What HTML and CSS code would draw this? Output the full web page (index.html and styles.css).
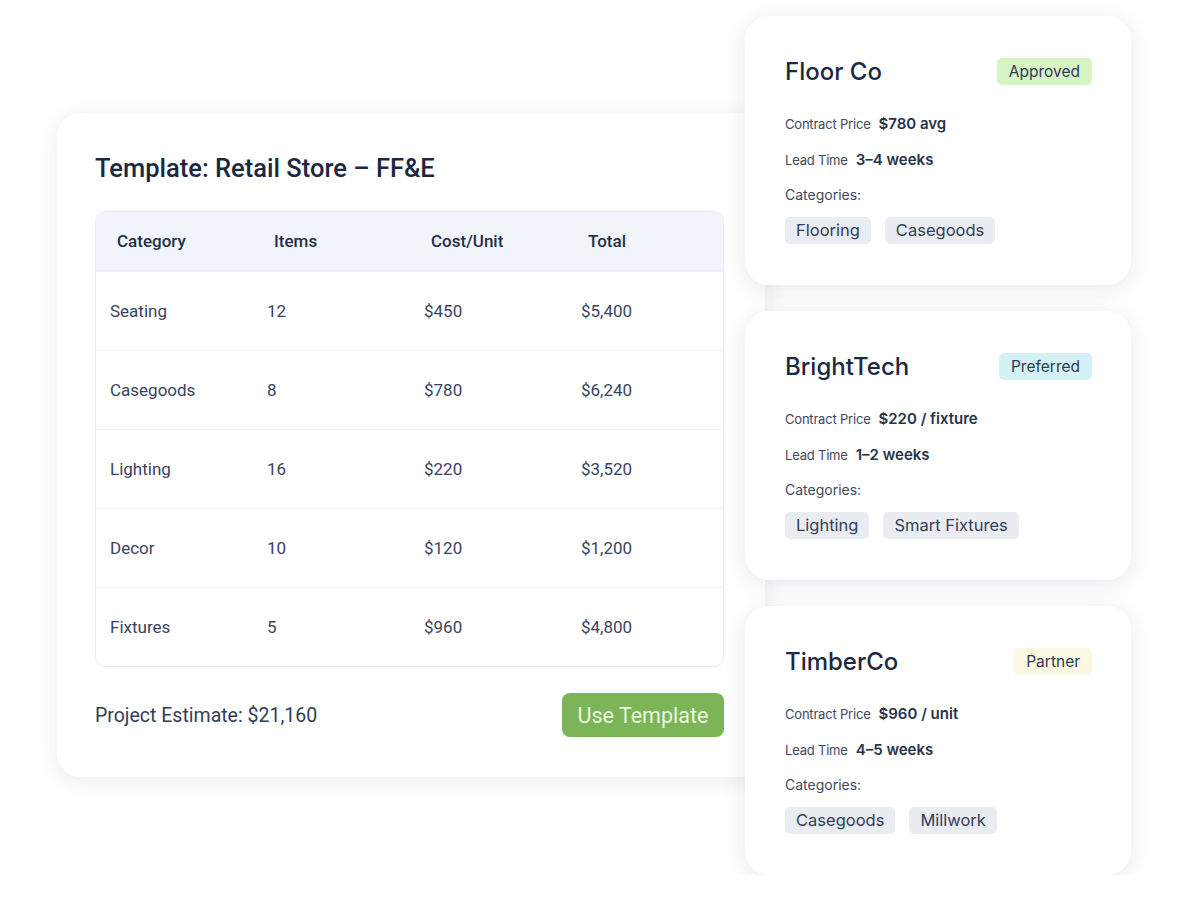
FILE: index.html
```html
<!DOCTYPE html>
<html lang="en">
<head>
    <meta charset="UTF-8">
    <meta name="viewport" content="width=device-width, initial-scale=1.0">
    <title>Retail Store Template</title>
    <link rel="stylesheet" href="styles.css">
</head>
<body>
    <div class="stage">
        <section class="template-card">
            <h2 class="template-title">Template: Retail Store – FF&amp;E</h2>
            <div class="table-box">
                <div class="trow thead">
                    <div>Category</div>
                    <div>Items</div>
                    <div>Cost/Unit</div>
                    <div>Total</div>
                </div>
                <div class="trow">
                    <div>Seating</div><div>12</div><div>$450</div><div>$5,400</div>
                </div>
                <div class="trow">
                    <div>Casegoods</div><div>8</div><div>$780</div><div>$6,240</div>
                </div>
                <div class="trow">
                    <div>Lighting</div><div>16</div><div>$220</div><div>$3,520</div>
                </div>
                <div class="trow">
                    <div>Decor</div><div>10</div><div>$120</div><div>$1,200</div>
                </div>
                <div class="trow">
                    <div>Fixtures</div><div>5</div><div>$960</div><div>$4,800</div>
                </div>
            </div>
            <div class="template-foot">
                <span class="estimate">Project Estimate: $21,160</span>
                <button class="use-btn">Use Template</button>
            </div>
        </section>

        <div class="vendors">
            <div class="vendor">
                <div class="vendor-head">
                    <h3>Floor Co</h3>
                    <span class="badge approved">Approved</span>
                </div>
                <div class="meta meta-first"><span class="meta-label">Contract Price</span><span class="meta-value">$780 avg</span></div>
                <div class="meta"><span class="meta-label">Lead Time</span><span class="meta-value">3–4 weeks</span></div>
                <div class="cats">Categories:</div>
                <div class="tags"><span class="tag">Flooring</span><span class="tag">Casegoods</span></div>
            </div>
            <div class="vendor">
                <div class="vendor-head">
                    <h3>BrightTech</h3>
                    <span class="badge preferred">Preferred</span>
                </div>
                <div class="meta meta-first"><span class="meta-label">Contract Price</span><span class="meta-value">$220 / fixture</span></div>
                <div class="meta"><span class="meta-label">Lead Time</span><span class="meta-value">1–2 weeks</span></div>
                <div class="cats">Categories:</div>
                <div class="tags"><span class="tag">Lighting</span><span class="tag">Smart Fixtures</span></div>
            </div>
            <div class="vendor">
                <div class="vendor-head">
                    <h3>TimberCo</h3>
                    <span class="badge partner">Partner</span>
                </div>
                <div class="meta meta-first"><span class="meta-label">Contract Price</span><span class="meta-value">$960 / unit</span></div>
                <div class="meta"><span class="meta-label">Lead Time</span><span class="meta-value">4–5 weeks</span></div>
                <div class="cats">Categories:</div>
                <div class="tags"><span class="tag">Casegoods</span><span class="tag">Millwork</span></div>
            </div>
        </div>
    </div>
</body>
</html>
```

FILE: styles.css
```css
body {
    margin: 0;
    background-color: #fff;
    font-family: Roboto, "Liberation Sans", sans-serif;
    color: #2b3550;
}
h2, h3 {
    margin: 0;
}
.stage {
    display: flex;
    align-items: flex-start;
    padding: 16px 0 0 57px;
}

/* template card */
.template-card {
    width: 708px;
    box-sizing: border-box;
    margin-top: 97px;
    padding: 40px 41px 40px 38px;
    background-color: #fff;
    border-radius: 24px;
    box-shadow: 0 4px 22px rgba(20, 30, 60, 0.09);
}
.template-title {
    font-size: 25.5px;
    font-weight: 500;
    line-height: 30px;
    color: #1c2742;
}
.table-box {
    margin-top: 28px;
    border: 1px solid #e9edf3;
    border-radius: 10px;
    overflow: hidden;
}
.trow {
    display: grid;
    grid-template-columns: 157px 157px 157px 1fr;
    box-sizing: border-box;
    height: 79px;
    align-items: center;
    border-top: 1px solid #f0f2f6;
    font-size: 17px;
    color: #39435e;
}
.trow div {
    padding-left: 14px;
}
.thead {
    height: 59px;
    border-top: none;
    background-color: #f1f5fb;
    border-bottom: 1px solid #e8edf4;
    font-weight: 500;
    color: #243049;
}
.thead div {
    padding-left: 21px;
}
.template-foot {
    display: flex;
    justify-content: space-between;
    align-items: center;
    margin-top: 26px;
}
.estimate {
    font-size: 19.5px;
    color: #333d58;
}
.use-btn {
    width: 162px;
    height: 44px;
    border: none;
    border-radius: 8px;
    background-color: #7bb557;
    color: #eaf6de;
    font-family: Roboto, "Liberation Sans", sans-serif;
    font-size: 21.5px;
    cursor: pointer;
}

/* vendor cards */
.vendors {
    position: relative;
    z-index: 1;
    display: flex;
    flex-direction: column;
    gap: 26px;
    margin-left: -20px;
    width: 386px;
    font-family: Inter, "Noto Sans", sans-serif;
}
.vendor {
    height: 269px;
    box-sizing: border-box;
    padding: 38px 39px 0 40px;
    background-color: #fff;
    border-radius: 24px;
    box-shadow: 0 4px 22px rgba(20, 30, 60, 0.1);
}
.vendor-head {
    display: flex;
    justify-content: space-between;
    align-items: center;
    height: 34px;
}
.vendor-head h3 {
    font-size: 24px;
    font-weight: 500;
    color: #1d2843;
}
.badge {
    height: 27px;
    line-height: 27px;
    padding: 0 12px;
    border-radius: 5px;
    font-size: 15.5px;
    color: #2e3954;
}
.approved {
    background-color: #d6f4c4;
}
.preferred {
    background-color: #d4f1f6;
}
.partner {
    background-color: #faf8e0;
}
.meta {
    display: flex;
    align-items: baseline;
    gap: 8px;
    height: 18px;
    line-height: 18px;
    margin-top: 18px;
}
.meta-first {
    margin-top: 27px;
}
.meta-label {
    font-size: 13px;
    color: #3e4862;
    letter-spacing: -0.2px;
}
.meta-value {
    font-size: 15px;
    font-weight: 600;
    color: #27324c;
}
.cats {
    margin-top: 17px;
    font-size: 14px;
    line-height: 18px;
    color: #3e4862;
}
.tags {
    display: flex;
    gap: 14px;
    margin-top: 13px;
}
.tag {
    height: 27px;
    line-height: 27px;
    padding: 0 11px;
    border-radius: 5px;
    background-color: #e9ecf1;
    font-size: 16.5px;
    color: #333e58;
}
```
